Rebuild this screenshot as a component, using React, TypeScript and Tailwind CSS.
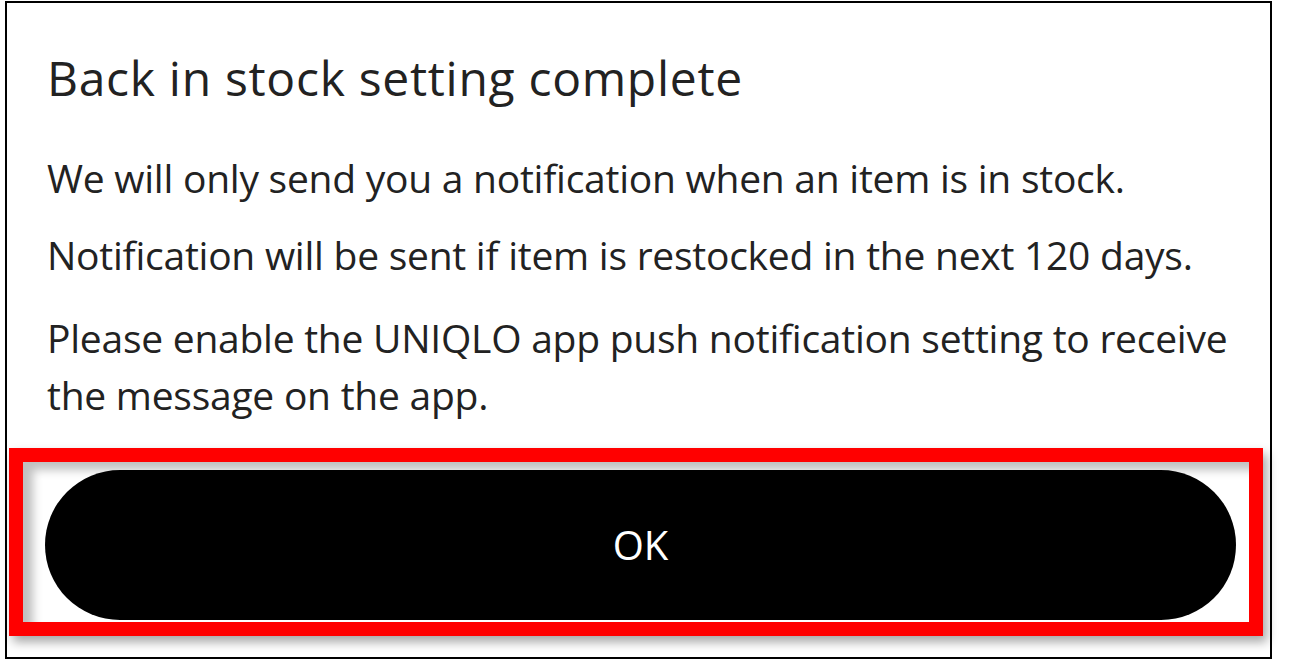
export default function App() {
  return (
    <div className="h-[666px] w-[1292px] bg-white pl-[5px] pt-[1px] font-['Open_Sans','Noto_Sans',sans-serif] text-[#222]">
      <div className="flex h-[658px] w-[1267px] flex-col border-2 border-black">
        <div className="pl-10 pr-4 pt-[47px]">
          <h1 className="text-[48px] leading-[56px] font-normal tracking-[0.7px]">Back in stock setting complete</h1>
          <div className="mt-[43px] flex flex-col text-[39px] leading-[57px] tracking-[-0.25px]">
            <p>We will only send you a notification when an item is in stock.</p>
            <p className="mt-[20px]">Notification will be sent if item is restocked in the next 120 days.</p>
            <p className="mt-[26px]">
              Please enable the UNIQLO app push notification setting to receive the message on the app.
            </p>
          </div>
        </div>

        {/* Highlighted OK button */}
        <div className="ml-[2px] mt-[25px] w-[1254px] border-[14px] border-[#ff0000] shadow-[4px_6px_10px_rgba(0,0,0,0.35)]">
          <div className="bg-white pt-[8px] pb-[2px] pl-[22px] pr-[13px] shadow-[inset_10px_8px_10px_rgba(0,0,0,0.25)]">
            <button className="flex h-[150px] w-full items-center justify-center rounded-full bg-black text-[40px] text-white">
              OK
            </button>
          </div>
        </div>
      </div>
    </div>
  )
}
